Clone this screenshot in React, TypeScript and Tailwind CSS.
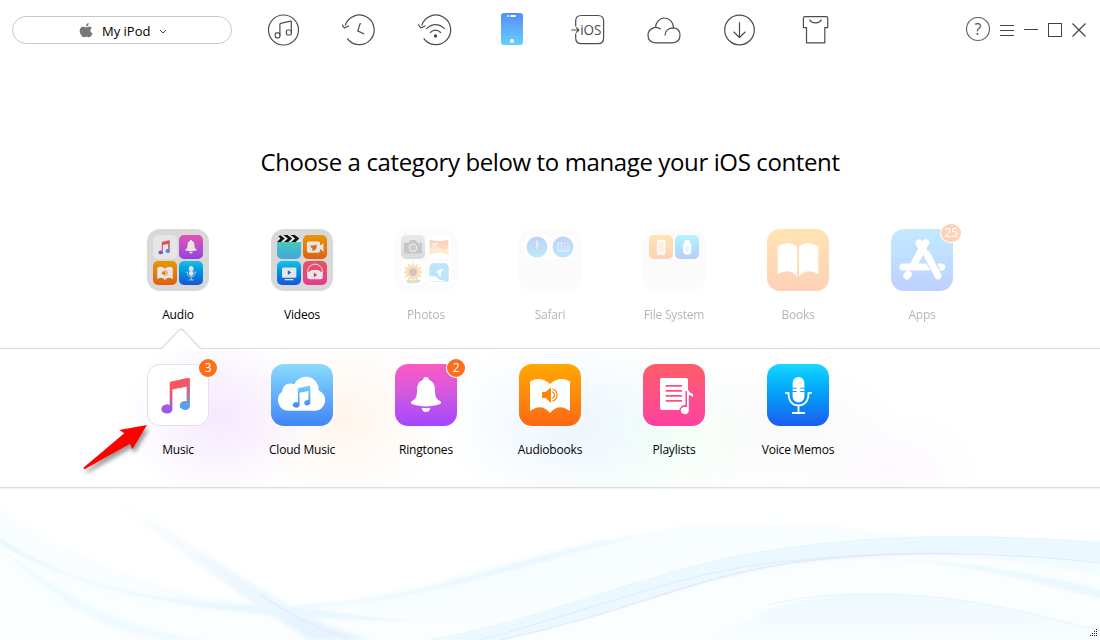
import type { ReactNode } from 'react'
import clsx from 'clsx'

const NOTE = 'M22.7 19.5Q22.7 18 24.2 17.6L41 14.1Q42.7 13.8 42.7 15.4V40.5A5 4.3 0 1 1 39.8 37.6V22.4L25.4 25.6V44A5.6 4.6 0 1 1 22.7 41Z'

function Glyph({ children }: { children: ReactNode }) {
  return (
    <svg viewBox="0 0 62 62" className="block h-full w-full" fill="none">
      {children}
    </svg>
  )
}

const MusicGlyph = () => (
  <Glyph>
    <path d={NOTE} fill="url(#noteLeft)" />
    <path d="M34 15.6L41 14.1Q42.7 13.8 42.7 15.4V40.5A5 4.3 0 1 1 39.8 37.6V22.4L34 23.7Z" fill="url(#noteRight)" />
  </Glyph>
)

const CloudGlyph = () => (
  <Glyph>
    <path d="M17.6 46.7A10.7 10.7 0 0 1 11.2 27.5A8 8 0 0 1 23.2 20.6A12.8 12.8 0 0 1 47.8 26.4A10.6 10.6 0 0 1 44.5 46.7Z" fill="#fff" />
    <path d={NOTE} fill="url(#cloudNote)" transform="translate(12.8 13) scale(.62)" />
  </Glyph>
)

const BellGlyph = () => (
  <Glyph>
    <path d="M31 13C33 13 33.8 14.3 33.9 15.8C38.2 17.2 40 21 40 26C40 33.5 41.5 34.8 45 37C46.8 38.3 46.3 39.6 44.4 40.3C36 43.1 26 43.1 17.6 40.3C15.7 39.6 15.2 38.3 17 37C20.5 34.8 22 33.5 22 26C22 21 23.8 17.2 28.1 15.8C28.2 14.3 29 13 31 13Z" fill="#fff" />
    <path d="M26.6 43.8Q31 44.5 35.4 43.8Q34.7 48 31 48Q27.3 48 26.6 43.8Z" fill="#fff" />
  </Glyph>
)

const AudiobookGlyph = () => (
  <Glyph>
    <path d="M11 17.5Q21.5 11.5 31 20Q40.5 11.5 51 17.5V47Q39.5 38.5 31 49Q22.5 38.5 11 47Z" fill="#fff" />
    <path d="M23 28H26.5L32 23.2V39L26.5 34H23Z" fill="#fd8608" />
    <path d="M33 27.8A3.4 3.4 0 0 1 33 34.3M33.4 25A6.2 6.2 0 0 1 33.4 37" stroke="#fd8608" strokeWidth="1.2" />
  </Glyph>
)

const PlaylistGlyph = () => (
  <Glyph>
    <rect x="17" y="14" width="28" height="32" rx="2" fill="#fff" />
    <path d="M22.7 21.8H39M22.7 26.8H39M22.7 31.8H39M22.7 36.8H39" stroke="#ff4f80" strokeWidth="1.8" />
    <path d="M43.2 27V42.3C39.5 41.5 36.5 43.8 37 47.5" stroke="#ff4590" strokeWidth="1.5" />
    <path d="M44 26H45.4Q46 28.5 50 30V33.3Q48 31 45.8 31V46.5A4 3.4 0 1 1 44 43.9Z" fill="#fff" />
  </Glyph>
)

const MicGlyph = () => (
  <Glyph>
    <rect x="25.6" y="13" width="11.8" height="25.5" rx="5.9" fill="#fff" />
    <path d="M25 24.3H29.7M33.2 24.3H38M25 27.5H29.7M33.2 27.5H38" stroke="#1d9dfa" strokeWidth="1.1" />
    <path d="M18 28.8H21.5C21.3 37 25.3 41.3 31.5 41.3S41.7 37 41.5 28.8H45M31.5 41.5V49M25 49H38" stroke="#fff" strokeWidth="1.8" />
  </Glyph>
)

const BookGlyph = () => (
  <Glyph>
    <path d="M10.7 17.5Q21 10.5 30.1 17.5V47.8Q22.5 38.5 10.7 45ZM31.9 17.5Q41 10.5 51.3 17.5V45Q39.5 38.5 31.9 47.8Z" fill="#fff" />
  </Glyph>
)

const AppStoreGlyph = () => (
  <Glyph>
    <path d="M12 38H50.5" stroke="#fff" strokeWidth="7" strokeLinecap="round" />
    <path d="M28 14L32.5 22" stroke="#fff" strokeWidth="7" strokeLinecap="round" />
    <path d="M34.5 23L45 42" stroke="#429bff" strokeWidth="9.5" />
    <path d="M36 25.5L47 46.8" stroke="#fff" strokeWidth="7" strokeLinecap="round" />
    <path d="M34.5 13.8L22 37" stroke="#fff" strokeWidth="7.4" strokeLinecap="round" />
    <path d="M17 45.3L16 46.7" stroke="#fff" strokeWidth="7.4" strokeLinecap="round" />
  </Glyph>
)

const ClapperGlyph = () => (
  <Glyph>
    <path d="M0 0H62V18H0Z" fill="#fff" />
    <path d="M0 0H8L20 9L10 18H0L9 9ZM16 0H27L39 9L29 18H18L28 9ZM35 0H46L58 9L48 18H37L47 9ZM54 0H62V6Z" fill="#111" />
  </Glyph>
)

const CamcorderGlyph = () => (
  <Glyph>
    <rect x="10" y="17" width="34" height="29" rx="5" fill="#fff" />
    <path d="M43 28L53 21V43L43 35Z" fill="#fff" />
    <path d="M20 27H28L32 25H35V34L30 40H24L24 33H20Z" fill="#f37b13" />
  </Glyph>
)

const TvGlyph = () => (
  <Glyph>
    <rect x="13" y="17" width="37" height="26" rx="2" fill="#fff" />
    <path d="M20 48H42" stroke="#fff" strokeWidth="3" />
    <path d="M28 24L37 30L28 36Z" fill="#1f78e6" />
  </Glyph>
)

const HeadphoneGlyph = () => (
  <Glyph>
    <path d="M12 36V27A19 19 0 0 1 50 27V36" stroke="#fff" strokeWidth="2.5" />
    <path d="M11 32Q11 27 17 27L22 23H40L45 27Q51 27 51 32V42Q51 47 45 47H17Q11 47 11 42Z" fill="#fff" />
    <path d="M28 30L37 36L28 42Z" fill="#f13f75" />
  </Glyph>
)

const CameraGlyph = () => (
  <Glyph>
    <path d="M8 20H20L24 13H38L42 20H54V48H8Z" fill="#444" />
    <circle cx="31" cy="33" r="10" fill="#555" stroke="#ddd" strokeWidth="2.4" />
    <circle cx="48" cy="24" r="2" fill="#f3b02a" />
  </Glyph>
)

const PanoramaGlyph = () => (
  <Glyph>
    <path d="M7 12Q31 19 55 12V50Q31 42 7 50Z" fill="url(#orangeFill)" />
    <path d="M7 36Q23 25 36 34T55 29V50Q31 42 7 50Z" fill="#ffbd66" />
    <path d="M14 22L19 27L26 20" stroke="#fff" strokeWidth="3" />
  </Glyph>
)

const SunflowerGlyph = () => (
  <Glyph>
    <path d="M31 34Q35 46 29 60M32 52Q43 45 50 51Q42 59 32 54M30 52Q21 47 14 52Q22 60 30 55" fill="#54aa35" stroke="#54aa35" strokeWidth="2" />
    {[0, 30, 60, 90, 120, 150].map((angle) => (
      <ellipse key={angle} cx="31" cy="29" rx="25" ry="5" fill="#fa9124" transform={`rotate(${angle} 31 29)`} />
    ))}
    <circle cx="31" cy="29" r="10" fill="#6b4229" />
  </Glyph>
)

const AlbumGlyph = () => (
  <Glyph>
    <path d="M12 6H50L56 14V51Q56 54 53 54H9Q6 54 6 51V14Z" fill="#24a7f5" />
    <path d="M6 40Q23 36 31 48L54 53H9Q6 54 6 51ZM30 24Q34 20 44 21L37 27L36 40H31L30 32L24 29Z" fill="#fff" />
  </Glyph>
)

const HistoryGlyph = () => (
  <Glyph>
    <circle cx="31" cy="31" r="27" fill="url(#blueFill)" />
    <path d="M31 15V35" stroke="#fff" strokeWidth="3" />
    <path d="M31 34H46" stroke="#e6405a" strokeWidth="3" />
  </Glyph>
)

const BookmarkGlyph = () => (
  <Glyph>
    <circle cx="31" cy="31" r="27" fill="url(#blueFill)" />
    <path d="M18 21H44V42H18ZM26 21V42M36 21V42" stroke="#fff" strokeOpacity=".7" strokeWidth="2" />
    <path d="M36 20H42V28L39 26L36 28Z" fill="#e64a55" />
  </Glyph>
)

const PhoneGlyph = () => (
  <Glyph>
    <rect x="21" y="12" width="21" height="39" rx="4" fill="#fff" />
    <rect x="24.5" y="18" width="14" height="26" fill="#ffc795" />
  </Glyph>
)

const UsbGlyph = () => (
  <Glyph>
    <path d="M25 13H38V22H42V41Q42 51 31.5 51T21 41V22H25Z" fill="#fff" />
    <path d="M31.5 27V44M27 32V36L31 39M36 31V35L32 38" stroke="#4b95f5" strokeWidth="1.5" />
  </Glyph>
)

type Mini = { bg: string; glyph: ReactNode }

function Folder({ items, dim }: { items: Mini[]; dim?: boolean }) {
  return (
    <div className={clsx('grid h-[62px] w-[62px] grid-cols-[24px_24px] grid-rows-[24px_24px] gap-0.5 rounded-[13px] p-1.5', dim ? 'bg-[#f3f3f3]' : 'bg-[#d8d8d8]')}>
      {items.map((item, i) => (
        <div key={i} className={clsx('overflow-hidden rounded-[5px] bg-linear-to-b', item.bg, !dim && 'brightness-90')}>
          {item.glyph}
        </div>
      ))}
    </div>
  )
}

function Tile({ bg, children }: { bg: string; children: ReactNode }) {
  return <div className={clsx('h-[62px] w-[62px] rounded-[13px] bg-linear-to-b', bg)}>{children}</div>
}

type Item = { label: string; icon: ReactNode; badge?: string; faded?: boolean }

function Category({ label, icon, badge, faded }: Item) {
  return (
    <button className={clsx('flex w-[124px] flex-col items-center', faded && 'opacity-30')}>
      <div className="relative">
        {icon}
        {badge && (
          <span
            className={clsx(
              'absolute -top-[5px] flex h-[18px] items-center justify-center rounded-full bg-[#fd6d1b] text-xs leading-none tracking-[-0.3px] text-white ring-1 ring-white',
              badge.length > 1 ? 'left-[50px] w-5' : 'left-[52px] w-[18px]',
            )}
          >
            {badge}
          </span>
        )}
      </div>
      <span className="mt-4 text-xs leading-4 tracking-[-0.2px] whitespace-nowrap text-black">{label}</span>
    </button>
  )
}

const PINK = 'from-[#fd5ac0] to-[#a445ff]'
const ORANGE = 'from-[#ffa800] to-[#fb6714]'
const BLUE = 'from-[#19d8ff] to-[#1d5bee]'
const ROSE = 'from-[#ff5d67] to-[#ff3fa1]'
const WHITE = 'from-white to-white'

const categories: Item[] = [
  {
    label: 'Audio',
    icon: (
      <Folder
        items={[
          { bg: WHITE, glyph: <MusicGlyph /> },
          { bg: PINK, glyph: <BellGlyph /> },
          { bg: ORANGE, glyph: <AudiobookGlyph /> },
          { bg: BLUE, glyph: <MicGlyph /> },
        ]}
      />
    ),
  },
  {
    label: 'Videos',
    icon: (
      <Folder
        items={[
          { bg: 'from-[#48efb8] to-[#51b5f5]', glyph: <ClapperGlyph /> },
          { bg: ORANGE, glyph: <CamcorderGlyph /> },
          { bg: BLUE, glyph: <TvGlyph /> },
          { bg: ROSE, glyph: <HeadphoneGlyph /> },
        ]}
      />
    ),
  },
  {
    label: 'Photos',
    faded: true,
    icon: (
      <Folder
        dim
        items={[
          { bg: 'from-[#bbb] to-[#888]', glyph: <CameraGlyph /> },
          { bg: WHITE, glyph: <PanoramaGlyph /> },
          { bg: WHITE, glyph: <SunflowerGlyph /> },
          { bg: WHITE, glyph: <AlbumGlyph /> },
        ]}
      />
    ),
  },
  {
    label: 'Safari',
    faded: true,
    icon: (
      <Folder
        dim
        items={[
          { bg: WHITE, glyph: <HistoryGlyph /> },
          { bg: WHITE, glyph: <BookmarkGlyph /> },
        ]}
      />
    ),
  },
  {
    label: 'File System',
    faded: true,
    icon: (
      <Folder
        dim
        items={[
          { bg: ORANGE, glyph: <PhoneGlyph /> },
          { bg: BLUE, glyph: <UsbGlyph /> },
        ]}
      />
    ),
  },
  { label: 'Books', faded: true, icon: <Tile bg={ORANGE}><BookGlyph /></Tile> },
  { label: 'Apps', faded: true, badge: '25', icon: <Tile bg="from-[#3bb9ff] to-[#2d68ff]"><AppStoreGlyph /></Tile> },
]

const audioItems: Item[] = [
  { label: 'Music', badge: '3', icon: <Tile bg="from-white to-white ring-1 ring-inset ring-[#e3e3e3]"><MusicGlyph /></Tile> },
  { label: 'Cloud Music', icon: <Tile bg="from-[#8adafb] to-[#4284f6]"><CloudGlyph /></Tile> },
  { label: 'Ringtones', badge: '2', icon: <Tile bg={PINK}><BellGlyph /></Tile> },
  { label: 'Audiobooks', icon: <Tile bg={ORANGE}><AudiobookGlyph /></Tile> },
  { label: 'Playlists', icon: <Tile bg={ROSE}><PlaylistGlyph /></Tile> },
  { label: 'Voice Memos', icon: <Tile bg={BLUE}><MicGlyph /></Tile> },
]

// 36x36 line icons of the top bar
const toolIcons: { name: string; art: ReactNode }[] = [
  {
    name: 'Music',
    art: (
      <>
        <circle cx="17.5" cy="18" r="15" />
        <path d="M13.9 23.8V12.3Q13.9 11.5 14.7 11.3L24.4 9.2Q25.3 9 25.3 9.8V20.7" />
        <rect x="9.2" y="20.8" width="4.7" height="5" rx="1.6" />
        <rect x="20.4" y="18" width="4.9" height="5" rx="1.6" />
      </>
    ),
  },
  {
    name: 'Backup history',
    art: (
      <g transform="translate(-2 0)">
        <path d="M5.2 13.5A14.8 14.8 0 1 1 7.2 26.3M1.6 12.4L4.4 16L9 13.8" />
        <path d="M20.4 11L17.7 18.9L24.2 22" />
      </g>
    ),
  },
  {
    name: 'Air backup',
    art: (
      <g transform="translate(-1.5 0)">
        <path d="M5.2 13.5A14.8 14.8 0 1 1 7.2 26.3M1.6 12.4L4.4 16L9 13.8" />
        <path d="M9.8 16.9Q19 8.3 28.3 16.9M13.5 20.7Q18.9 15.4 24.5 20.7" />
        <circle cx="19" cy="24" r="1.1" fill="#4c4c4c" />
      </g>
    ),
  },
  {
    name: 'Device',
    art: (
      <g stroke="none">
        <rect x="7" y="1" width="22" height="32" rx="3" fill="url(#phoneFill)" />
        <rect x="13" y="3.1" width="2" height="2" rx="1" fill="#fff" />
        <rect x="16" y="3.1" width="6" height="2" rx="1" fill="#fff" />
        <circle cx="18" cy="29" r="2" fill="#fff" />
      </g>
    ),
  },
  {
    name: 'To iOS',
    art: (
      <>
        <path d="M5.7 14.5V9Q5.7 3.5 11.2 3.5H28Q33.6 3.5 33.6 9V26Q33.6 31.7 28 31.7H11.2Q5.7 31.7 5.7 26V21.5" />
        <path d="M1.3 18H8.6M6.2 15.4L8.8 18L6.2 20.6" />
        <text x="10.2" y="22.8" fill="#4c4c4c" stroke="none" fontSize="14.5" textLength="21.3" lengthAdjust="spacingAndGlyphs">iOS</text>
      </>
    ),
  },
  {
    name: 'Cloud',
    art: (
      <path d="M9.5 15.8A9 9.8 0 0 1 27.5 15.8C31.5 16.1 34 19 34 23.3Q34 30.8 26.2 30.8H9.8Q2 30.8 2 23.3C2 17 9.5 13.2 14.6 17.2M27.5 15.8C22.8 15.8 19.2 18.5 19 23.6" />
    ),
  },
  {
    name: 'Download',
    art: (
      <>
        <circle cx="17.5" cy="18" r="14.8" />
        <path d="M17.5 10.2V25.3M11.6 19.8L17.5 25.5L23.4 19.8" />
      </>
    ),
  },
  {
    name: 'Skin',
    art: (
      <>
        <path d="M7 4.7H28.2Q29.7 4.7 29.7 6.2V15.6H26.8V30.8H8.5V15.6H5.4V6.2Q5.4 4.7 7 4.7Z" />
        <path d="M11.6 7.5Q12.8 10.9 17.5 10.9T23.3 7.5" />
      </>
    ),
  },
]

function SharedGradients() {
  const stops = (a: string, b: string) => (
    <>
      <stop offset="0" stopColor={a} />
      <stop offset="1" stopColor={b} />
    </>
  )
  return (
    <svg className="absolute h-0 w-0" aria-hidden="true">
      <defs>
        <linearGradient id="noteLeft" x1="0" y1="0.3" x2="0" y2="1">{stops('#fd5560', '#845bff')}</linearGradient>
        <linearGradient id="noteRight" x1="0" y1="0.2" x2="0" y2="0.95">{stops('#f35866', '#42a9ff')}</linearGradient>
        <linearGradient id="cloudNote" x1="0" y1="0" x2="0" y2="1">{stops('#79cdf9', '#4284f6')}</linearGradient>
        <linearGradient id="phoneFill" x1="0" y1="0" x2="0" y2="1">{stops('#568df8', '#65cefa')}</linearGradient>
        <linearGradient id="orangeFill" x1="0" y1="0" x2="0" y2="1">{stops('#f8651d', '#ff9c3c')}</linearGradient>
        <linearGradient id="blueFill" x1="0" y1="0" x2="0" y2="1">{stops('#2a70ed', '#23b7ed')}</linearGradient>
        <linearGradient id="fadeDown" x1="0" y1="0" x2="0" y2="1">{stops('#ffffff', '#e4f3fe')}</linearGradient>
        <linearGradient id="fadeUp" x1="0" y1="0" x2="0" y2="1">{stops('#edf9ff', '#fbfeff')}</linearGradient>
      </defs>
    </svg>
  )
}

const strands = [0, 1, 2, 3, 4, 5, 6, 7, 8, 9]

function Waves() {
  return (
    <svg viewBox="0 8 1100 152" className="block h-[152px] w-full" fill="none">
      <g className="blur-[2px]">
        <path d="M-10 22C65 80 180 122 280 125C430 126 560 43 758 43C910 43 970 76 1110 77V170H-10Z" fill="#fbfeff" />
        <path d="M280 125C430 125 550 43 758 43C835 43 890 53 930 63C790 48 720 67 650 90C540 122 420 132 280 125Z" fill="#f8fdff" />
        <path d="M95 8C150 36 205 74 270 114C305 136 330 148 372 160H310C250 122 185 76 95 8Z" fill="url(#fadeDown)" />
      </g>

      {strands.map((i) => (
        <g key={i} stroke="#f3fbff" strokeWidth="0.6">
          <path d={`M0 ${26 + i * 4}C70 ${80 + i * 4} 180 ${123 + i} 280 ${125 + i}C430 ${126 + i * 4} 560 ${43 + i * 9} 800 ${50 + i * 4}`} />
          <path d={`M${715 + i * 18} 160C${768 + i * 12} ${121 + i * 4} 820 ${114 + i * 4.5} 880 ${114 + i * 4.5}C970 ${116 + i * 4} 1030 ${133 + i * 2.5} 1100 ${151 + i}`} />
        </g>
      ))}

      <g className="blur-[1px]">
        <path d="M0 57C75 112 180 123 260 125C325 127 350 138 420 141C240 139 95 121 0 64Z" fill="#e9f7ff" />
        <path d="M300 125C430 122 520 72 640 56C530 81 430 122 300 127Z" fill="#e9f7ff" />
        <path d="M0 68C70 117 115 148 210 160H160C95 150 50 114 0 68Z" fill="#f0fbff" />
        <path d="M430 160C555 138 655 86 780 69C880 54 990 54 1110 63V83C980 70 880 75 805 83C705 94 620 135 500 160Z" fill="#ebf8ff" />
        <path d="M855 79C960 79 1030 91 1110 112V121C1025 101 960 79 855 79Z" fill="#ebf9ff" />
        <path d="M870 76C950 72 1030 82 1110 97V83C1000 72 930 72 870 76Z" fill="#f2fbff" />
        <path d="M715 160C768 121 820 114 880 114C970 116 1030 133 1110 153V165H1060C1000 151 930 151 880 160Z" fill="url(#fadeUp)" />
      </g>

      <g className="blur-[0.5px]">
        <path d="M430 160C555 138 655 86 780 69C880 54 990 54 1100 63" stroke="#e3f5fd" />
        <path d="M480 160C600 128 690 88 800 80C880 71 1000 71 1100 83" stroke="#dfeefb" strokeWidth="1.2" />
        <path d="M500 160C630 132 690 98 790 83C840 76 910 72 960 74" stroke="#e5e5fb" strokeWidth="1.2" />
        <path d="M260 115C294 136 316 149 350 160" stroke="#ebeafc" strokeWidth="1.5" />
        <path d="M768 125C805 115 840 114 880 114C970 116 1030 133 1100 151" stroke="#e5f6ff" />
      </g>
    </svg>
  )
}

export default function App() {
  return (
    <div className="relative flex h-[640px] w-[1100px] flex-col overflow-hidden bg-white font-['Open_Sans','Noto_Sans',sans-serif]">
      <SharedGradients />

      {/* Top bar */}
      <header className="flex h-[60px] shrink-0 items-center">
        <button className="ml-3 flex h-7 w-[220px] items-center rounded-full border border-[#c8c8c8] pl-[66px]">
          <svg viewBox="0 0 14 15" className="h-[15px] w-3.5" fill="#777">
            <path d="M9.7 0C9.8 1.8 8.5 3.4 6.9 3.4C6.7 1.7 8.2.2 9.7 0ZM12.9 5.1C10.7 6.5 10.9 9.3 13.5 10.5C12.6 13.2 11 14.8 9.2 14.2C7.8 13.7 7.1 13.7 5.8 14.2C3.9 14.9 2.2 12.7 1.2 10.3C-.2 6.7 1.4 3.7 4.1 3.7C5.5 3.7 6.3 4.4 7.1 4.4S9.1 3.6 10.2 3.7C11.3 3.7 12.3 4.2 12.9 5.1Z" />
          </svg>
          <span className="ml-[9px] pt-0.5 text-[13px] leading-none text-black">My iPod</span>
          <svg viewBox="0 0 8 5" className="mt-0.5 ml-[9px] h-[5px] w-2" fill="none" stroke="#444">
            <path d="M1 1L4 4L7 1" />
          </svg>
        </button>

        <nav className="-mt-px ml-3.5 flex">
          {toolIcons.map((tool) => (
            <button key={tool.name} aria-label={tool.name} className="flex w-[76px] justify-center">
              <svg viewBox="0 0 36 36" className="h-9 w-9" fill="none" stroke="#4c4c4c" strokeWidth="1.2" strokeLinejoin="round">
                {tool.art}
              </svg>
            </button>
          ))}
        </nav>

        <svg viewBox="0 0 122 26" className="ml-[111px] h-[26px] w-[122px]" fill="none" stroke="#444">
          <circle cx="13" cy="12" r="11.5" stroke="#666" strokeWidth="1.2" />
          <text x="13" y="17.7" textAnchor="middle" fill="#555" stroke="none" fontSize="16">?</text>
          <path d="M35 8.5H49M35 13.5H49M35 18.5H49M59 12.5H73" />
          <rect x="83.5" y="6.5" width="13" height="13" />
          <path d="M107.5 6.5L120.5 19.5M120.5 6.5L107.5 19.5" strokeWidth="1.2" />
        </svg>
      </header>

      <h1 className="mt-[86px] text-center text-2xl leading-8 tracking-[-0.38px] whitespace-nowrap text-black">
        Choose a category below to manage your iOS content
      </h1>

      <section className="mt-[51px] flex h-[119px] shrink-0 pl-[116px]">
        {categories.map((item) => (
          <Category key={item.label} {...item} />
        ))}
      </section>

      {/* Expanded category */}
      <section className="relative h-[140px] shrink-0 border-y border-[#dcdcdc] bg-[radial-gradient(ellipse_95px_85px_at_220px_68px,#f5e8ff_0%,transparent_100%),radial-gradient(ellipse_100px_85px_at_345px_70px,#fff5ed_0%,transparent_100%),radial-gradient(ellipse_130px_90px_at_570px_75px,#edf6ff_0%,transparent_100%),radial-gradient(ellipse_120px_85px_at_655px_85px,#f3fff6_0%,transparent_100%),radial-gradient(ellipse_120px_70px_at_780px_80px,#f9f9f9_0%,transparent_100%),radial-gradient(ellipse_90px_60px_at_890px_120px,#fdf9ff_0%,transparent_100%)] shadow-[0_1px_0_#f3f3f3]">
        <svg viewBox="0 0 42 23" className="absolute -top-[22px] left-40 h-[23px] w-[42px]">
          <path d="M0 21.5H1.5L18.5 3.5Q21 1 23.5 3.5L40.5 21.5H42V23H0Z" fill="#fff" />
          <path d="M0 21.5H1.5L18.5 3.5Q21 1 23.5 3.5L40.5 21.5H42" fill="none" stroke="#dedede" strokeWidth="1.3" />
        </svg>
        <div className="flex pt-[15px] pl-[116px]">
          {audioItems.map((item) => (
            <Category key={item.label} {...item} />
          ))}
        </div>
        <svg viewBox="0 0 70 50" className="absolute top-[75px] left-[81px] h-[50px] w-[70px] overflow-visible">
          <path d="M66 1L38.3 6L43.3 9.3L2.7 43.5Q2 45.5 4 45L49 19.7L51.3 25.3Z" fill="#ff0000" className="drop-shadow-[2px_4px_2px_rgba(0,0,0,0.4)]" />
        </svg>
      </section>

      <Waves />

      <svg viewBox="0 0 10 10" className="absolute right-0.5 bottom-0.5 h-2.5 w-2.5" fill="#222">
        <path d="M8 1h1v1h-1zM6 3h1v1h-1zM8 3h1v1h-1zM4 5h1v1h-1zM6 5h1v1h-1zM8 5h1v1h-1zM2 7h1v1h-1zM4 7h1v1h-1zM6 7h1v1h-1zM8 7h1v1h-1z" />
      </svg>
    </div>
  )
}
